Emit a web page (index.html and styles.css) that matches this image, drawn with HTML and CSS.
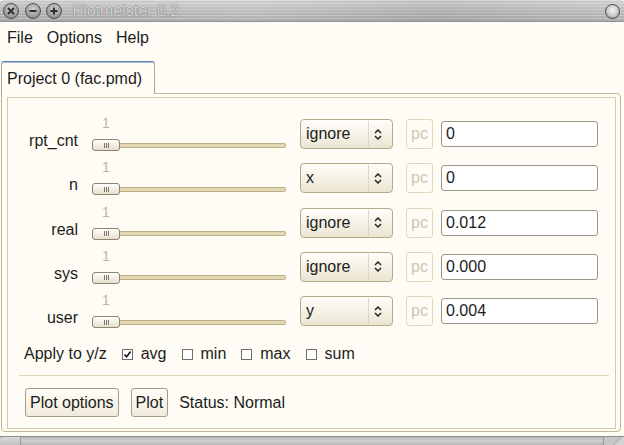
FILE: index.html
```html
<!DOCTYPE html>
<html>
<head>
<meta charset="utf-8">
<title>Plotmeister 0.2</title>
<link rel="stylesheet" href="styles.css">
</head>
<body>
<div class="window">
  <div class="titlebar">
    <span class="tb-btn"><svg width="8" height="8" viewBox="0 0 8 8"><path d="M1 1L7 7M7 1L1 7" stroke="#2e2e2e" stroke-width="2"/></svg></span>
    <span class="tb-btn"><svg width="8" height="8" viewBox="0 0 8 8"><path d="M0.5 4H7.5" stroke="#2e2e2e" stroke-width="2"/></svg></span>
    <span class="tb-btn"><svg width="8" height="8" viewBox="0 0 8 8"><path d="M4 0.5V7.5M0.5 4H7.5" stroke="#2e2e2e" stroke-width="2"/></svg></span>
    <span class="title">Plotmeister 0.2</span>
    <span class="tb-max"></span>
  </div>
  <div class="menubar">
    <span class="menu-item">File</span>
    <span class="menu-item">Options</span>
    <span class="menu-item">Help</span>
  </div>
  <div class="tabs">
    <div class="tab">Project 0 (fac.pmd)</div>
  </div>
  <div class="panel">
    <div class="frame">
      <div class="rows">
        <div class="row">
          <div class="lbl">rpt_cnt</div>
          <div class="slider"><div class="sval">1</div><div class="strack"><div class="handle"><i></i><i></i><i></i></div><div class="track"></div></div></div>
          <div class="select"><span class="sel-text">ignore</span><span class="sel-arrow"><svg width="8" height="13" viewBox="0 0 8 13"><path d="M1 5L4 2L7 5M1 8L4 11L7 8" fill="none" stroke="#222" stroke-width="1.5"/></svg></span></div>
          <div class="pc">pc</div>
          <div class="entry">0</div>
        </div>
        <div class="row">
          <div class="lbl">n</div>
          <div class="slider"><div class="sval">1</div><div class="strack"><div class="handle"><i></i><i></i><i></i></div><div class="track"></div></div></div>
          <div class="select"><span class="sel-text">x</span><span class="sel-arrow"><svg width="8" height="13" viewBox="0 0 8 13"><path d="M1 5L4 2L7 5M1 8L4 11L7 8" fill="none" stroke="#222" stroke-width="1.5"/></svg></span></div>
          <div class="pc">pc</div>
          <div class="entry">0</div>
        </div>
        <div class="row">
          <div class="lbl">real</div>
          <div class="slider"><div class="sval">1</div><div class="strack"><div class="handle"><i></i><i></i><i></i></div><div class="track"></div></div></div>
          <div class="select"><span class="sel-text">ignore</span><span class="sel-arrow"><svg width="8" height="13" viewBox="0 0 8 13"><path d="M1 5L4 2L7 5M1 8L4 11L7 8" fill="none" stroke="#222" stroke-width="1.5"/></svg></span></div>
          <div class="pc">pc</div>
          <div class="entry">0.012</div>
        </div>
        <div class="row">
          <div class="lbl">sys</div>
          <div class="slider"><div class="sval">1</div><div class="strack"><div class="handle"><i></i><i></i><i></i></div><div class="track"></div></div></div>
          <div class="select"><span class="sel-text">ignore</span><span class="sel-arrow"><svg width="8" height="13" viewBox="0 0 8 13"><path d="M1 5L4 2L7 5M1 8L4 11L7 8" fill="none" stroke="#222" stroke-width="1.5"/></svg></span></div>
          <div class="pc">pc</div>
          <div class="entry">0.000</div>
        </div>
        <div class="row">
          <div class="lbl">user</div>
          <div class="slider"><div class="sval">1</div><div class="strack"><div class="handle"><i></i><i></i><i></i></div><div class="track"></div></div></div>
          <div class="select"><span class="sel-text">y</span><span class="sel-arrow"><svg width="8" height="13" viewBox="0 0 8 13"><path d="M1 5L4 2L7 5M1 8L4 11L7 8" fill="none" stroke="#222" stroke-width="1.5"/></svg></span></div>
          <div class="pc">pc</div>
          <div class="entry">0.004</div>
        </div>
      </div>
      <div class="apply">
        <span class="apply-lbl">Apply to y/z</span>
        <span class="cb-item"><span class="cb"><svg width="9" height="9" viewBox="0 0 9 9"><path d="M1.5 4.5L3.6 6.8L7.6 1.5" fill="none" stroke="#111" stroke-width="1.6"/></svg></span>avg</span>
        <span class="cb-item"><span class="cb"></span>min</span>
        <span class="cb-item"><span class="cb"></span>max</span>
        <span class="cb-item"><span class="cb"></span>sum</span>
      </div>
      <div class="sep"></div>
      <div class="actions">
        <span class="btn">Plot options</span>
        <span class="btn">Plot</span>
        <span class="status">Status: Normal</span>
      </div>
    </div>
  </div>
  <div class="gap"></div>
  <div class="bottombar"><span class="corner-l"></span><span class="grip"></span></div>
</div>
</body>
</html>
```

FILE: styles.css
```css
html, body {
  margin: 0;
  padding: 0;
}
body {
  background: #fefcf5;
  font-family: "Liberation Sans", Arial, sans-serif;
  font-size: 16px;
  color: #1c1c1c;
}
.window {
  width: 624px;
  height: 445px;
  display: flex;
  flex-direction: column;
  overflow: hidden;
  background: #fefcf5;
}

/* title bar */
.titlebar {
  flex: none;
  height: 22px;
  box-sizing: border-box;
  display: flex;
  align-items: center;
  padding: 0 4px 0 3px;
  border-bottom: 1px solid #939393;
  border-radius: 3px 3px 0 0;
  background:
    repeating-linear-gradient(180deg, rgba(255,255,255,0.18) 0 1px, rgba(0,0,0,0.03) 1px 3px),
    linear-gradient(90deg, rgba(255,255,255,0.0), rgba(255,255,255,0.12) 40%, rgba(0,0,0,0.04) 70%, rgba(255,255,255,0.1)),
    linear-gradient(#d2d2d2, #bdbdbd 45%, #acacac);
}
.tb-btn {
  flex: none;
  width: 16px;
  height: 16px;
  box-sizing: border-box;
  border-radius: 50%;
  border: 1px solid #4e4e4e;
  background: radial-gradient(circle at 50% 35%, #cfcfcf, #9a9a9a 65%, #707070);
  display: flex;
  align-items: center;
  justify-content: center;
  margin-right: 5.5px;
}
.title {
  flex: 1;
  margin-left: 5px;
  color: #d3d3d3;
  font-size: 16px;
  line-height: 18px;
  text-shadow: 0 0 1px #7a7a7a, 0 0 1px #7a7a7a;
}
.tb-max {
  flex: none;
  width: 15px;
  height: 15px;
  box-sizing: border-box;
  border-radius: 50%;
  border: 1px solid #474747;
  background: radial-gradient(circle at 50% 40%, #f6f6f6, #c8c8c8 55%, #8f8f8f);
  margin-top: 1px;
}

/* menu */
.menubar {
  flex: none;
  height: 39px;
  box-sizing: border-box;
  padding-top: 7px;
  display: flex;
}
.menu-item {
  padding: 0 7px;
  line-height: 18px;
}

/* tabs */
.tabs {
  flex: none;
  height: 32px;
  display: flex;
  align-items: flex-start;
  padding-left: 1px;
}
.tab {
  position: relative;
  z-index: 1;
  width: 154px;
  height: 33px;
  box-sizing: border-box;
  border: 1px solid #a9a596;
  border-top-color: #5d80b2;
  border-bottom: none;
  border-radius: 3px 3px 0 0;
  box-shadow: inset 0 1px 0 #a9bdd8;
  background: #fefcf5;
  padding: 8px 0 0 5px;
  line-height: 18px;
}

/* panel */
.panel {
  flex: none;
  height: 339px;
  width: 620px;
  margin-left: 1px;
  box-sizing: border-box;
  border: 1px solid #c2b792;
  border-radius: 0 4px 4px 4px;
  padding: 3px 4px 2px 5px;
}
.frame {
  height: 100%;
  box-sizing: border-box;
  border: 1px solid #d3caa8;
  padding-top: 21px;
}
.rows {
  display: flex;
  flex-direction: column;
  gap: 14.25px;
}
.row {
  display: flex;
  align-items: flex-start;
  height: 30px;
}
.lbl {
  flex: none;
  width: 70px;
  margin-right: 14px;
  text-align: right;
  padding-top: 13px;
  line-height: 18px;
}
.slider {
  flex: none;
  width: 194px;
  margin-right: 14px;
  margin-top: -3px;
  display: flex;
  flex-direction: column;
}
.sval {
  width: 28px;
  height: 14px;
  margin-bottom: 9px;
  text-align: center;
  font-size: 14px;
  line-height: 14px;
  color: #bdb5a3;
}
.strack {
  display: flex;
  align-items: center;
  height: 12px;
}
.handle {
  flex: none;
  width: 28px;
  height: 12px;
  box-sizing: border-box;
  border: 1px solid #8c8472;
  border-radius: 3px;
  background: linear-gradient(#fffefa, #e7e0cd);
  display: flex;
  align-items: center;
  justify-content: center;
  gap: 1px;
}
.handle i {
  display: block;
  width: 1px;
  height: 5px;
  background: #7a7468;
}
.track {
  flex: 1;
  height: 5px;
  box-sizing: border-box;
  background: #e3d8b3;
  border: 1px solid #bcae85;
  border-left: none;
  border-radius: 0 2px 2px 0;
}
.select {
  flex: none;
  width: 93px;
  height: 30px;
  box-sizing: border-box;
  margin-right: 13px;
  border: 1px solid #b3aa8d;
  border-radius: 4px;
  background: linear-gradient(#fffefb, #f4f0e4 55%, #ebe5d3);
  display: flex;
  align-items: center;
}
.sel-text {
  flex: 1;
  padding-left: 5px;
  line-height: 18px;
}
.sel-arrow {
  flex: none;
  width: 24px;
  height: 26px;
  box-sizing: border-box;
  border-left: 1px solid #ded7c3;
  display: flex;
  align-items: center;
  padding-left: 5px;
}
.pc {
  flex: none;
  width: 27px;
  height: 30px;
  box-sizing: border-box;
  margin-right: 8px;
  border: 1px solid #e0d7c0;
  border-radius: 3px;
  color: #cfc6b0;
  text-align: center;
  line-height: 28px;
}
.entry {
  flex: none;
  width: 157px;
  height: 26px;
  margin-top: 2px;
  box-sizing: border-box;
  border: 1px solid #9d9585;
  border-radius: 3px;
  background: #fff;
  padding-left: 4px;
  line-height: 24px;
}

/* apply row */
.apply {
  margin-top: 19px;
  padding-left: 16px;
  display: flex;
  align-items: center;
  line-height: 18px;
}
.apply-lbl {
  margin-right: 15px;
}
.cb-item {
  display: flex;
  align-items: center;
  margin-right: 15px;
}
.cb {
  width: 11px;
  height: 11px;
  box-sizing: border-box;
  border: 1px solid #6e6e6e;
  background: #fff;
  margin-right: 8px;
  display: flex;
  align-items: center;
  justify-content: center;
}
.sep {
  margin: 12px 6px 0 11px;
  height: 1px;
  background: #e0d7bd;
}
.actions {
  margin-top: 12px;
  padding-left: 17px;
  display: flex;
  align-items: center;
  gap: 12px;
  height: 29px;
}
.btn {
  height: 29px;
  box-sizing: border-box;
  border: 1px solid #a59d86;
  border-radius: 3px;
  background: linear-gradient(#fffdf8, #f1ebdc);
  padding: 0 4px;
  line-height: 27px;
}
.status {
  line-height: 18px;
  margin-left: -1px;
}

/* bottom frame */
.gap {
  flex: none;
  height: 4px;
}
.bottombar {
  flex: none;
  height: 9px;
  box-sizing: border-box;
  border-top: 1px solid #8e8e8e;
  background: linear-gradient(#b9b9b9, #cfcfcf 50%, #b4b4b4);
  display: flex;
  justify-content: space-between;
}
.corner-l {
  width: 20px;
  height: 8px;
  border-radius: 4px 0 0 0;
  background: linear-gradient(#d8d8d8, #c2c2c2);
  border-right: 1px solid #9a9a9a;
}
.grip {
  width: 20px;
  height: 8px;
  background: linear-gradient(135deg, #c6c6c6 60%, #8e8e8e 62%, #d4d4d4 66%);
  border-left: 1px solid #9a9a9a;
}
```
